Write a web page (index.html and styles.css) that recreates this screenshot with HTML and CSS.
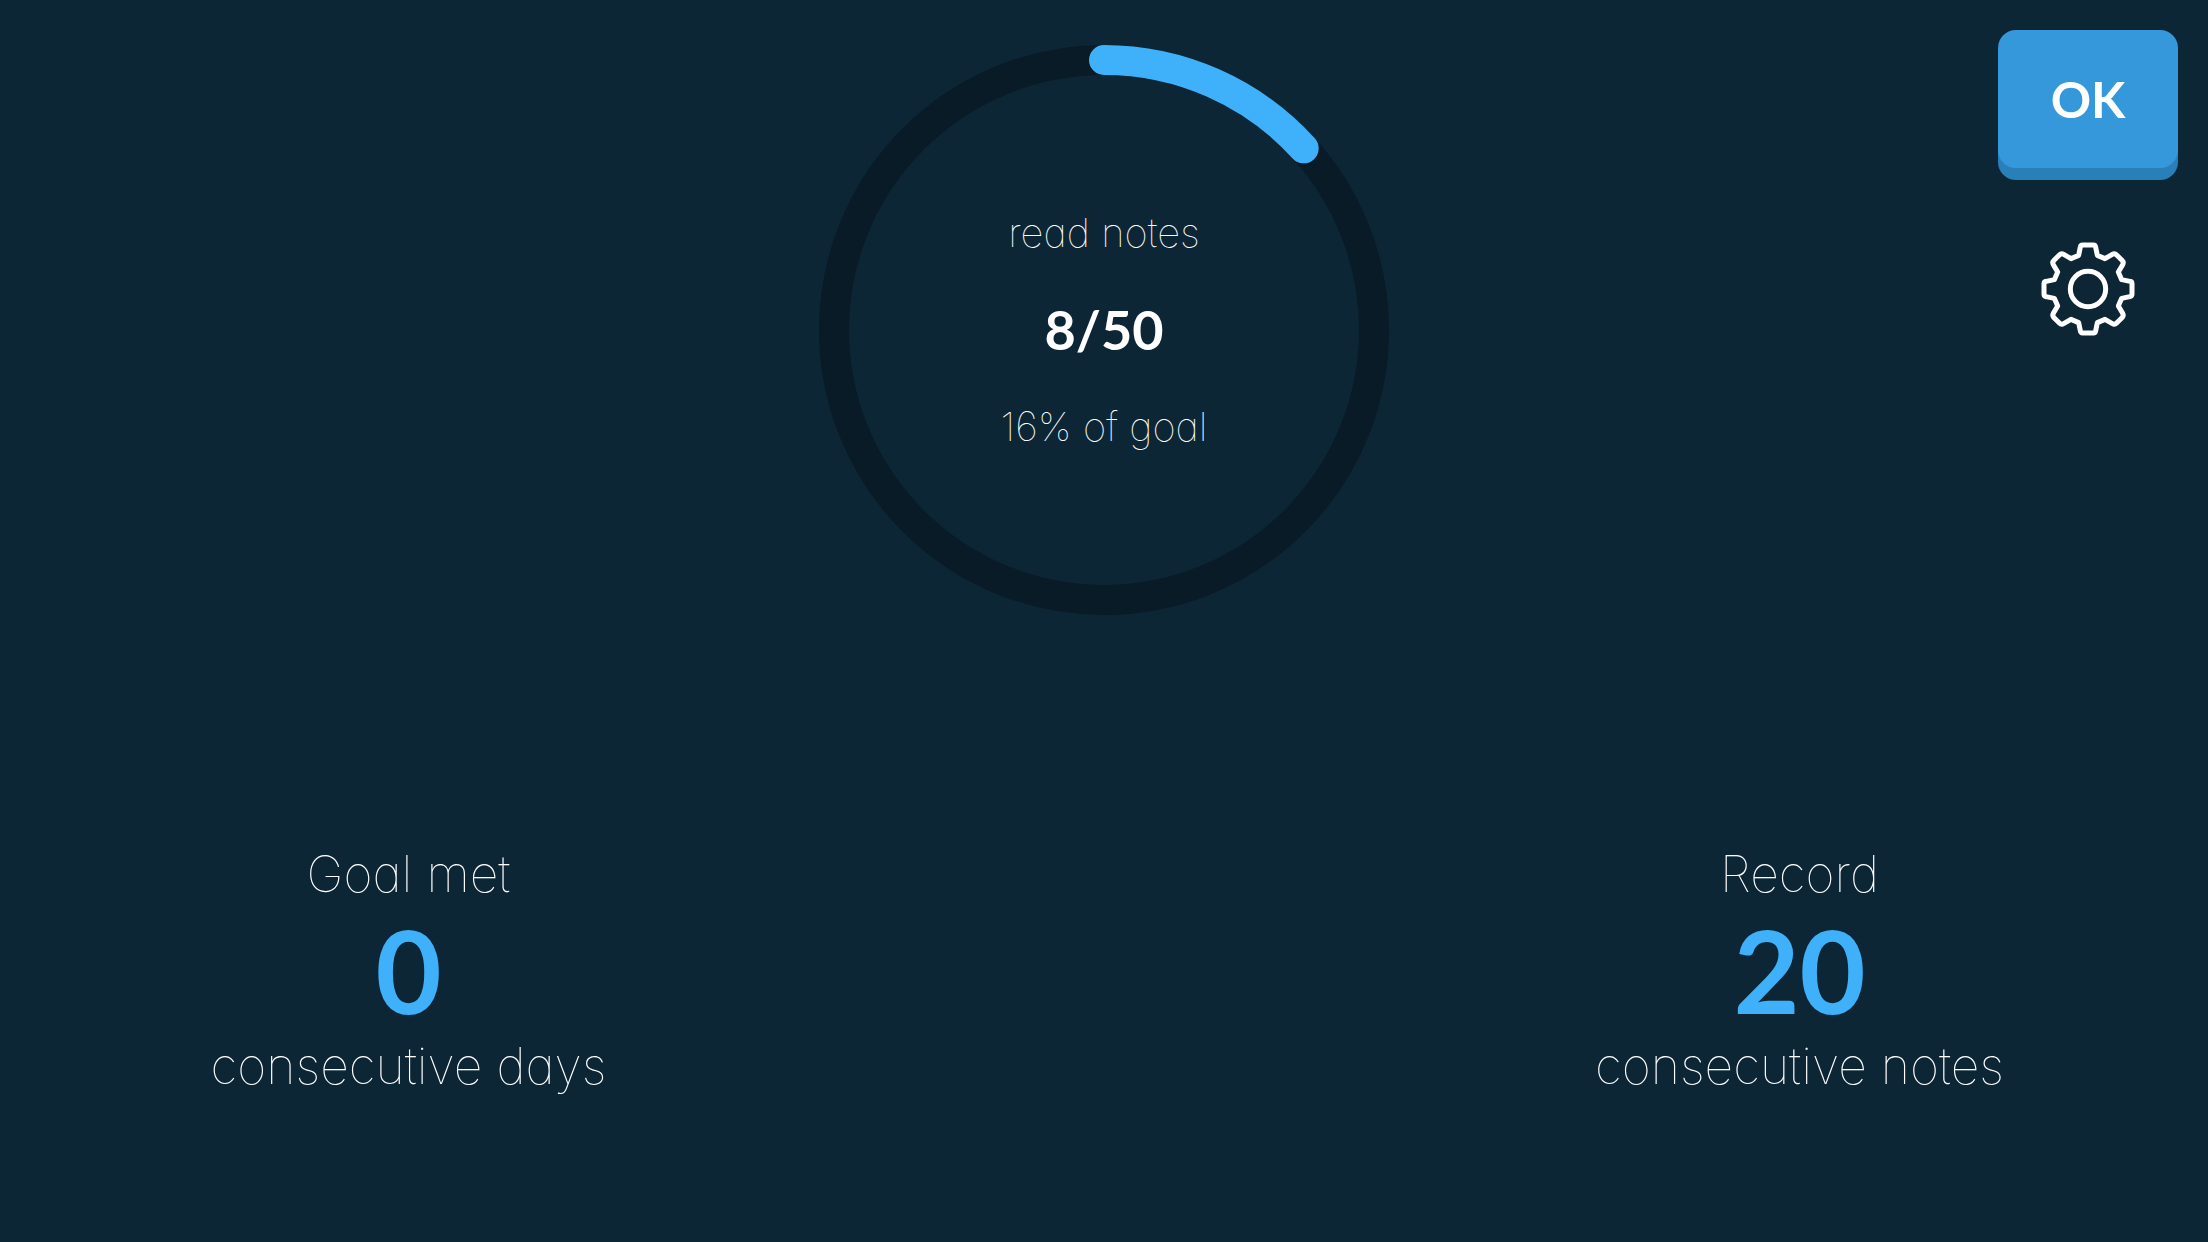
FILE: index.html
```html
<!DOCTYPE html>
<html lang="en">
<head>
  <meta charset="UTF-8" />
  <meta name="viewport" content="width=device-width, initial-scale=1.0" />
  <title>Daily Goal</title>
  <link rel="stylesheet" href="styles.css">
</head>
<body>
  <main class="top">
    <section class="goal">
      <svg class="goal-ring" viewBox="0 0 570 570" aria-hidden="true">
        <circle class="ring-track" cx="285" cy="285" r="270" />
        <path class="ring-progress" d="M285 15 A270 270 0 0 1 484.700 103.300" />
      </svg>
      <div class="goal-text">
        <p class="goal-label">read notes</p>
        <p class="goal-count">8/50</p>
        <p class="goal-label">16% of goal</p>
      </div>
    </section>

    <div class="actions">
      <button type="button" class="ok-btn">OK</button>
      <button type="button" class="settings-btn" aria-label="Settings">
        <svg viewBox="-141 -141 282 282" aria-hidden="true">
          <defs>
            <path id="gear-quarter" d="M0 -132 H16 Q22 -132 23 -125 L28 -101 L51 -91 L73 -104 Q80 -108 86 -102 L102 -86 Q108 -80 104 -73 L91 -51 L101 -28 L126 -23 Q132 -22 132 -16 V0" />
          </defs>
          <use href="#gear-quarter" />
          <use href="#gear-quarter" transform="rotate(90)" />
          <use href="#gear-quarter" transform="rotate(180)" />
          <use href="#gear-quarter" transform="rotate(270)" />
          <circle r="53" />
        </svg>
      </button>
    </div>
  </main>

  <footer class="stats">
    <section class="stat">
      <p class="stat-label">Goal met</p>
      <p class="stat-number">0</p>
      <p class="stat-label">consecutive days</p>
    </section>
    <section class="stat">
      <p class="stat-label">Record</p>
      <p class="stat-number">20</p>
      <p class="stat-label">consecutive notes</p>
    </section>
  </footer>
</body>
</html>
```
FILE: styles.css
```css
* {
  box-sizing: border-box;
}

body {
  margin: 0;
  min-height: 100vh;
  display: flex;
  flex-direction: column;
  justify-content: space-between;
  background-color: #0d2635;
  color: #ffffff;
  font-family: Inter, "Open Sans", sans-serif;
  font-weight: 100;
  /* single-storey a */
  font-feature-settings: "cv11";
}

p {
  margin: 0;
}

.top {
  display: grid;
  grid-template-columns: 1fr auto 1fr;
  align-items: start;
  padding: 30px;
}

.goal {
  grid-column: 2;
  display: grid;
  place-items: center;
  width: 570px;
  margin-top: 15px;
}

.goal-ring,
.goal-text {
  grid-area: 1 / 1;
}

.goal-ring {
  display: block;
  width: 100%;
  fill: none;
  stroke-width: 30;
}

.ring-track {
  stroke: #081b26;
}

.ring-progress {
  stroke: #3eb1fa;
  stroke-linecap: round;
}

.goal-text {
  display: flex;
  flex-direction: column;
  gap: 37px;
  text-align: center;
  line-height: 60px;
}

.goal-label {
  font-size: 40px;
}

.goal-count {
  font-family: Lato, sans-serif;
  font-size: 54px;
  font-weight: bold;
}

.actions {
  justify-self: end;
  display: flex;
  flex-direction: column;
  align-items: center;
  gap: 74px;
}

button {
  border: none;
  padding: 0;
  color: inherit;
  cursor: pointer;
}

.ok-btn {
  width: 180px;
  height: 138px;
  border-radius: 18px;
  background-color: #3598db;
  box-shadow: 0 12px 0 #2980b9;
  font-family: Lato, sans-serif;
  font-size: 50px;
  font-weight: bold;
}

.settings-btn {
  width: 94px;
  height: 94px;
  background: none;
}

.settings-btn svg {
  display: block;
  fill: none;
  stroke: #ffffff;
  stroke-width: 15;
  stroke-linejoin: round;
}

.stats {
  display: grid;
  grid-template-columns: 37% 37%;
  justify-content: space-between;
  padding-bottom: 146px;
  text-align: center;
}

.stat-label {
  font-size: 50px;
  line-height: 60px;
}

.stat-number {
  color: #3eb1fa;
  font-family: Lato, sans-serif;
  font-size: 114px;
  font-weight: bold;
  line-height: 132px;
}
```
